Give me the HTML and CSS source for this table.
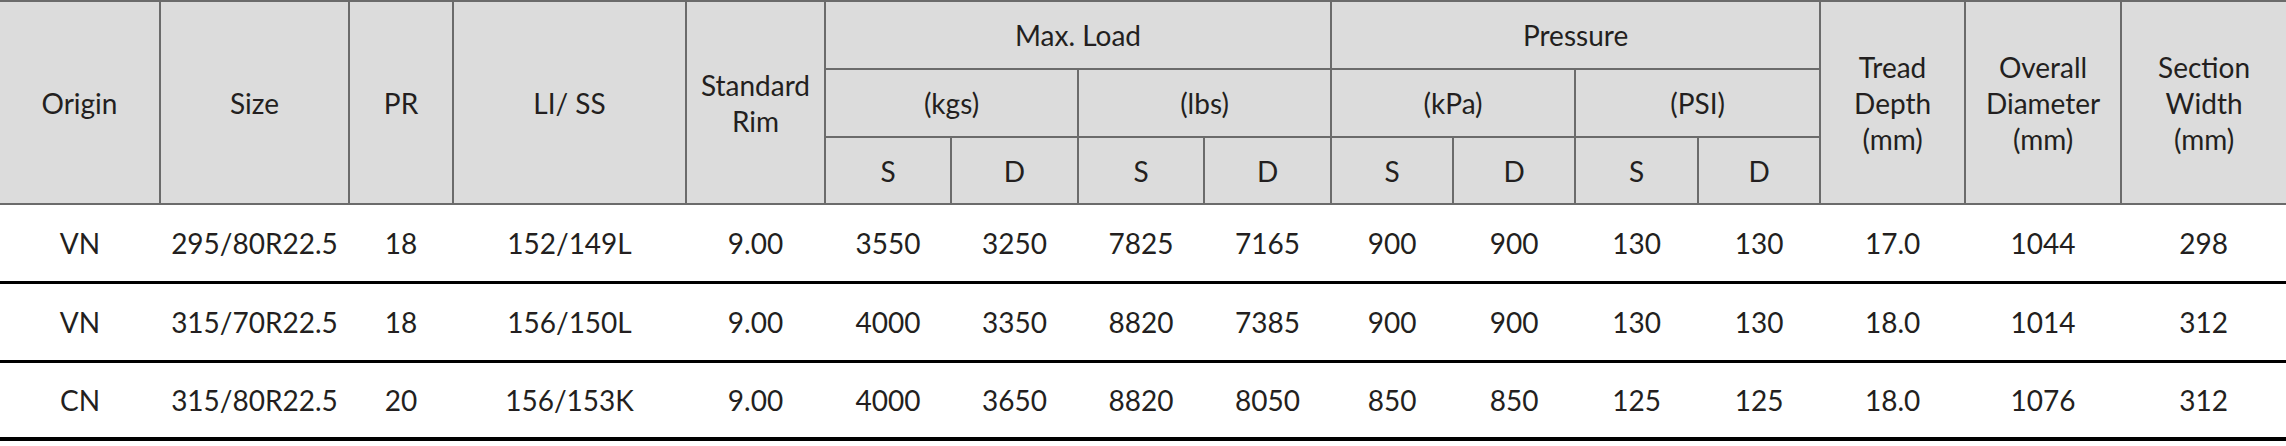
FILE: index.html
```html
<!DOCTYPE html>
<html lang="en">
<head>
<meta charset="utf-8">
<title>Tyre specifications</title>
<link rel="stylesheet" href="styles.css">
</head>
<body>
<table class="spec">
  <colgroup>
    <col class="c-origin"><col class="c-size"><col class="c-pr"><col class="c-li"><col class="c-rim">
    <col class="c-kg"><col class="c-kg2"><col class="c-kg"><col class="c-kg2">
    <col class="c-pa"><col class="c-pa"><col class="c-ps"><col class="c-pa">
    <col class="c-tread"><col class="c-dia"><col class="c-width">
  </colgroup>
  <thead>
    <tr class="h1">
      <th rowspan="3" class="first">Origin</th>
      <th rowspan="3">Size</th>
      <th rowspan="3">PR</th>
      <th rowspan="3">LI/ SS</th>
      <th rowspan="3">Standard<br>Rim</th>
      <th colspan="4">Max. Load</th>
      <th colspan="4">Pressure</th>
      <th rowspan="3">Tread<br>Depth<br>(mm)</th>
      <th rowspan="3">Overall<br>Diameter<br>(mm)</th>
      <th rowspan="3" class="last">Section<br>Width<br>(mm)</th>
    </tr>
    <tr class="h2">
      <th colspan="2">(kgs)</th>
      <th colspan="2">(lbs)</th>
      <th colspan="2">(kPa)</th>
      <th colspan="2">(PSI)</th>
    </tr>
    <tr class="h3">
      <th>S</th><th>D</th><th>S</th><th>D</th>
      <th>S</th><th>D</th><th>S</th><th>D</th>
    </tr>
  </thead>
  <tbody>
    <tr class="r1">
      <td>VN</td><td>295/80R22.5</td><td>18</td><td>152/149L</td><td>9.00</td>
      <td>3550</td><td>3250</td><td>7825</td><td>7165</td>
      <td>900</td><td>900</td><td>130</td><td>130</td>
      <td>17.0</td><td>1044</td><td>298</td>
    </tr>
    <tr class="r2">
      <td>VN</td><td>315/70R22.5</td><td>18</td><td>156/150L</td><td>9.00</td>
      <td>4000</td><td>3350</td><td>8820</td><td>7385</td>
      <td>900</td><td>900</td><td>130</td><td>130</td>
      <td>18.0</td><td>1014</td><td>312</td>
    </tr>
    <tr class="r3">
      <td>CN</td><td>315/80R22.5</td><td>20</td><td>156/153K</td><td>9.00</td>
      <td>4000</td><td>3650</td><td>8820</td><td>8050</td>
      <td>850</td><td>850</td><td>125</td><td>125</td>
      <td>18.0</td><td>1076</td><td>312</td>
    </tr>
  </tbody>
</table>
</body>
</html>
```

FILE: styles.css
```css
html, body {
  margin: 0;
  padding: 0;
  background: #ffffff;
}

body {
  font-family: Lato, "Open Sans", "Liberation Sans", sans-serif;
  font-size: 28px;
  color: #231f20;
}

.spec {
  border-collapse: collapse;
  table-layout: fixed;
  width: 2286px;
}

.c-origin { width: 160px; }
.c-size { width: 189px; }
.c-pr { width: 104px; }
.c-li { width: 233px; }
.c-rim { width: 139px; }
.c-kg { width: 126px; }
.c-kg2 { width: 127px; }
.c-pa { width: 122px; }
.c-ps { width: 123px; }
.c-tread { width: 145px; }
.c-dia { width: 156px; }
.c-width { width: 165px; }

.spec th {
  background: #dcdcdc;
  border: 2px solid #6b6b6b;
  font-weight: 400;
  line-height: 36px;
  padding: 0;
  text-align: center;
  vertical-align: middle;
}

.spec th.first { border-left: none; }
.spec th.last { border-right: none; }

.h1 { height: 68px; }
.h2 { height: 68px; }
.h3 { height: 67px; }

.spec td {
  border-bottom: 3px solid #000000;
  padding: 0;
  text-align: center;
  vertical-align: middle;
  line-height: 32px;
}

.r1 { height: 78px; }
.r2 { height: 79px; }
.r3 { height: 78px; }

.r3 td { border-bottom-width: 4px; }
```
